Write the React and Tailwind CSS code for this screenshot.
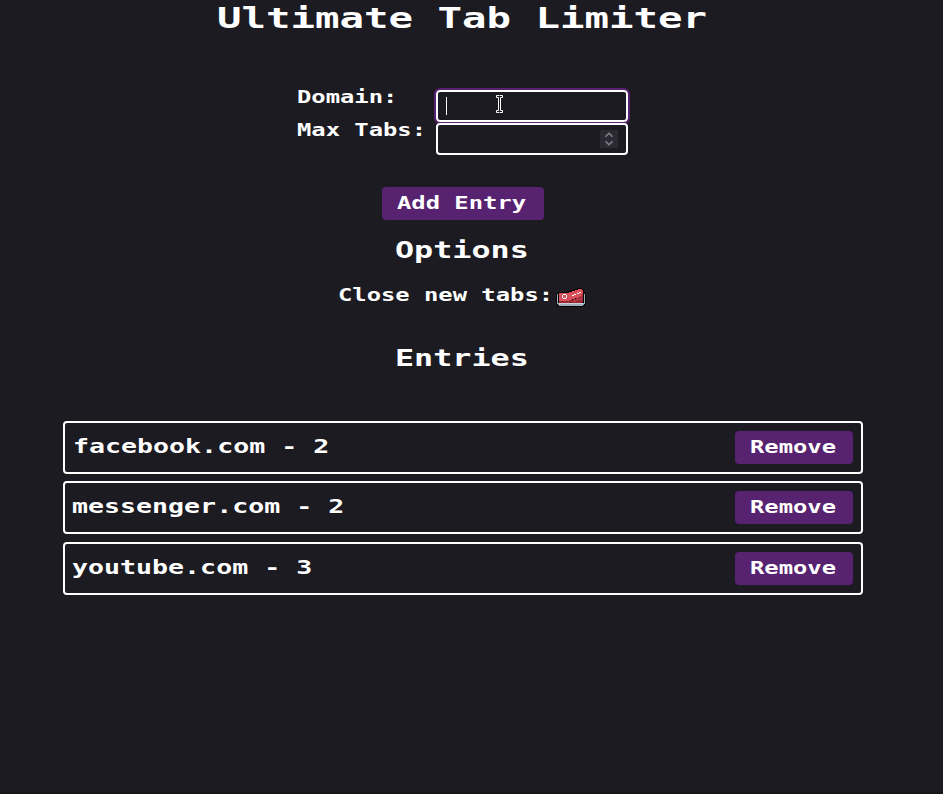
import React from "react";

const entries = [
  { domain: "facebook.com", max: 2, gap: "", indent: "pl-[8px]" },
  { domain: "messenger.com", max: 2, gap: "mt-[7px]", indent: "pl-[7px]" },
  { domain: "youtube.com", max: 3, gap: "mt-2", indent: "pl-[7px]" },
];

// Wide monospace lettering: the box takes the stretched width, the glyphs are scaled into it.
function Wide({ children, box, text }) {
  return (
    <span className={`block whitespace-pre ${box}`}>
      <span className={`block w-max origin-left ${text}`}>{children}</span>
    </span>
  );
}

const label = "text-[18px] leading-[14px] scale-x-[1.323]";
const button = "flex h-[33px] items-center justify-center rounded-[4px] bg-[#572270] pb-[2px]";

function Steak() {
  return (
    <svg className="block" width="30" height="20" viewBox="0 0 30 20" shapeRendering="crispEdges">
      <path fill="#050507" d="M1 5h1V4h10V3h2V2h3V1h4V0h5v1h2v4h1v1h1v10h-1v2h-1v1H2v-1H1v-2H0V6h1z" />
      <path fill="#9fb0bb" d="M1 6h1v9h1v1h24v-1h1V6h1v10h-1v1h-1v1H3v-1H2v-1H1z" />
      <path fill="#c9d3d8" d="M3 15h24v1H3z" />
      <path fill="#9c2a34" d="M3 12h14v-1h3v-1h2V9h2V7h2V5h1v9h-1v1H3z" />
      <path fill="#d9505c" d="M3 5h10V4h3V3h3V2h3V1h4v1h1v4h-1v2h-2v1h-2v1h-3v1h-3v1h-3v1H3z" />
      <path fill="#b93642" d="M17 12h3v-1h3v-1h2V8h1v4h-3v1h-3v1h-3z" />
      <path fill="#fff" d="M7 6h3v1H7zM6 7h1v3H6zM10 7h1v3h-1zM7 10h3v1H7zM16 7h2v1h-2zM18 6h2v1h-2zM21 5h2v1h-2zM23 4h2v1h-2z" />
    </svg>
  );
}

export default function App() {
  return (
    <div className="flex h-[794px] w-[943px] flex-col overflow-hidden border-b-2 border-[#17141a] bg-[#1c1b22] font-['DejaVu_Sans_Mono',monospace] font-bold text-white">
      <main className="flex w-[926px] flex-col items-center">
        <h1>
          <Wide box="w-[492px]" text="text-[29px] leading-[36px] scale-x-[1.403]">Ultimate Tab Limiter</Wide>
        </h1>

        <form className="mt-[54px] flex w-[332px] flex-col gap-px">
          <div className="flex h-8">
            <Wide box="w-[139px]" text={label}>Domain:</Wide>
            <div className="relative flex h-8 w-[192px] items-center rounded-[4px] border-2 border-white pl-2 outline-2 outline-[#572270]">
              <span className="h-[18px] w-px bg-white" />
              <svg className="absolute left-[57px] top-[2px]" width="9" height="20" viewBox="0 0 9 20">
                <path fill="#1c1b22" stroke="#fff" d="M1.5 1.5h2.5l.5.5.5-.5h2.5v2h-2v13h2v2H5l-.5-.5-.5.5H1.5v-2h2v-13h-2z" />
              </svg>
            </div>
          </div>
          <div className="flex h-8">
            <Wide box="w-[139px]" text={label}>Max Tabs:</Wide>
            <div className="relative z-10 flex h-8 w-[192px] items-center justify-end rounded-[4px] border-2 border-white bg-[#1c1b22] pr-2">
              <svg className="bg-[#2b2a33]" width="18" height="18" viewBox="0 0 18 18">
                <path fill="none" stroke="#85848d" strokeWidth="1.5" d="M5.5 6.7 9 3.3l3.5 3.4M5.5 11.3 9 14.7l3.5-3.4" />
              </svg>
            </div>
          </div>
        </form>

        <button className={`${button} mt-8 w-[162px]`}>
          <Wide box="w-[132px]" text={label}>Add Entry</Wide>
        </button>

        <h2 className="mt-[14px]">
          <Wide box="w-[136px]" text="text-[23px] leading-8 scale-x-[1.38]">Options</Wide>
        </h2>

        <div className="mt-[17px] flex h-6 w-[250px]">
          <Wide box="w-[218px]" text="text-[18px] leading-6 scale-x-[1.323]">Close new tabs:</Wide>
          <div className="pt-[5px]">
            <Steak />
          </div>
        </div>

        <h2 className="mt-[35px]">
          <Wide box="w-[136px]" text="text-[23px] leading-8 scale-x-[1.38]">Entries</Wide>
        </h2>

        <ul className="mt-[47px] w-[800px]">
          {entries.map((e) => (
            <li
              key={e.domain}
              className={`flex h-[53px] items-center justify-between rounded-[4px] border-2 border-white pr-2 ${e.indent} ${e.gap}`}
            >
              <Wide box="w-[300px]" text="text-[20px] leading-7 -mt-[3px] scale-x-[1.33]">
                {`${e.domain} - ${e.max}`}
              </Wide>
              <button className={`${button} w-[118px]`}>
                <Wide box="w-[89px]" text={label}>Remove</Wide>
              </button>
            </li>
          ))}
        </ul>
      </main>
    </div>
  );
}
